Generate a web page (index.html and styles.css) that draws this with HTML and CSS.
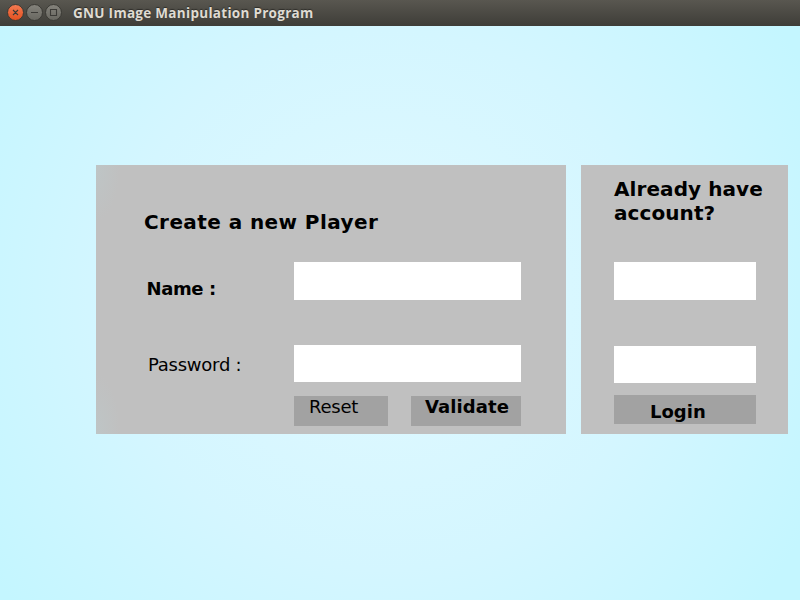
FILE: index.html
```html
<!DOCTYPE html>
<html lang="en"><head><meta charset="utf-8"><title>GNU Image Manipulation Program</title><link rel="stylesheet" href="styles.css"></head>
<body>
<header class="titlebar">
<svg class="controls" width="58" height="20" viewBox="0 0 58 20">
<defs><linearGradient id="close" x2="0" y2="1"><stop stop-color="#f37b53"/><stop offset="1" stop-color="#e4501f"/></linearGradient><linearGradient id="grey" x2="0" y2="1"><stop stop-color="#85837c"/><stop offset="1" stop-color="#686760"/></linearGradient></defs>
<g stroke="#3a3934"><circle cx="11.500" cy="9.500" r="8" fill="url(#close)"/><circle cx="30.500" cy="9.500" r="8" fill="url(#grey)"/><circle cx="49.500" cy="9.500" r="8" fill="url(#grey)"/></g>
<path d="M9 7l5 5m0-5l-5 5M27 9.500h7M46.500 6.500h6v6h-6z" fill="none" stroke="#3c3b37" stroke-width="1.100"/>
</svg>
<h1 class="title">GNU Image Manipulation Program</h1></header>
<main class="stage">
<form class="panel create">
<h2 class="heading">Create a new Player</h2>
<label class="name" for="name">Name :</label><input class="field first" id="name">
<label class="password" for="password">Password :</label><input class="field second" id="password" type="password">
<button class="button reset" type="reset">Reset</button><button class="button validate" type="button">Validate</button>
</form>
<form class="panel login">
<h2 class="heading">Already have<br>account?</h2>
<input class="field first" aria-label="Name"><input class="field second" type="password" aria-label="Password">
<button class="button enter" type="button">Login</button>
</form>
</main></body></html>
```
FILE: styles.css
```css
* { box-sizing: border-box; }
body { margin: 0; width: 800px; height: 600px; overflow: hidden; font-family: "DejaVu Sans", sans-serif; color: #000; }
.titlebar { height: 26px; display: flex; align-items: flex-start; padding: 3px 0 0 4px; background: linear-gradient(#595750, #3e3d38); }
.controls { flex: none; }
.title { margin: 0 0 0 11px; font: bold 13.5px/20px "Open Sans", sans-serif; letter-spacing: 0.29px; color: #dfdbd2; white-space: nowrap; text-shadow: 0 -1px 1px #2e2d29; }
.stage { height: 574px; display: flex; align-items: flex-start; gap: 15px; padding: 139px 12px 0 96px; background: radial-gradient(circle at 385px 274px, #e1f9ff, #d4f6ff 270px, #c4f6ff 480px); }
.panel { height: 269px; display: grid; background: #c0c0c0; align-items: start; justify-items: start; }
.create { width: 470px; grid-template-columns: 198px 117px 110px; grid-template-rows: 97px 83px 51px 38px; background: radial-gradient(ellipse 24px 56px at 0 0, #bec5c6, #c0c0c000), radial-gradient(ellipse 24px 60px at 0 100%, #bec5c6, #c0c0c000), #c0c0c0; }
.login { width: 207px; grid-template-columns: 142px; grid-template-rows: 97px 84px 49px 39px; padding-left: 33px; }
.heading { margin: 0; font-size: 20px; line-height: 24px; font-weight: bold; letter-spacing: 0.08px; white-space: nowrap; }
.create .heading { grid-column: 1 / -1; margin: 45px 0 0 48px; letter-spacing: 0.42px; }
.login .heading { margin-top: 12px; }
.name { margin: 15px 0 0 50.5px; font: bold 18px/24px "DejaVu Sans", sans-serif; letter-spacing: -0.4px; }
.password { margin: 8px 0 0 52px; font: 18px/24px "DejaVu Sans", sans-serif; letter-spacing: -0.25px; }
.field { width: 100%; height: 38px; border: 0; padding: 4px 8px; background: #fff; border-radius: 0; }
.second { height: 37px; }
.create .field { grid-column: 2 / 4; }
.button { border: 0; padding: 0; height: 30px; background: #a2a2a2; color: #000; font: bold 18px/24px "DejaVu Sans", sans-serif; display: flex; align-items: flex-start; }
.reset { grid-column: 2; width: 94px; padding-left: 15px; font: 18px/22px "DejaVu Sans", sans-serif; letter-spacing: -0.25px; }
.validate { width: 110px; padding-left: 14px; line-height: 22px; letter-spacing: 0.1px; }
.enter { width: 142px; height: 29px; padding: 5px 0 0 36px; }
```
